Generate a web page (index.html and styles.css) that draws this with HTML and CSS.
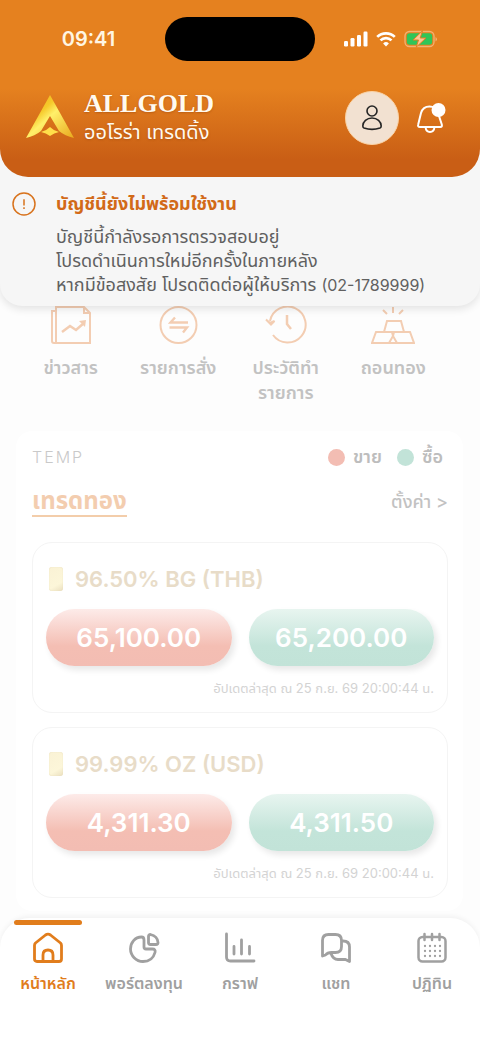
FILE: index.html
```html
<!DOCTYPE html>
<html lang="th">
<head>
<meta charset="utf-8">
<meta name="viewport" content="width=device-width, initial-scale=1">
<title>ALLGOLD</title>
<link rel="stylesheet" href="styles.css">
</head>
<body>
<div class="app">
  <header class="header">
    <div class="status">
      <time class="clock">09:41</time>
      <div class="island"></div>
      <div class="signals">
        <svg width="24" height="16" viewBox="0 0 24 16" fill="#fff"><rect x="0" y="10" width="4" height="5.500" rx="1.200"/><rect x="6.500" y="7" width="4" height="8.500" rx="1.200"/><rect x="13" y="4" width="4" height="11.500" rx="1.200"/><rect x="19.500" y="0.500" width="4" height="15" rx="1.200"/></svg>
        <svg width="20" height="16" viewBox="0 0 20 16" fill="none" stroke="#fff" stroke-width="2.700"><path d="M1.200 5.900a12.600 12.600 0 0 1 17.600 0M4.500 9.400a7.900 7.900 0 0 1 11 0"/><path d="M10 15.500l-2.900-3a4.200 4.200 0 0 1 5.800 0z" fill="#fff" stroke="none"/></svg>
        <svg width="34" height="18" viewBox="0 0 34 18"><rect x="1" y="1.500" width="29" height="15" rx="4.500" fill="none" stroke="#f3b272" stroke-width="1.300"/><rect x="2.800" y="3.300" width="25.400" height="11.400" rx="3" fill="#30c558"/><path d="M31.500 7v4.400q1.500-.7 1.500-2.200T31.500 7z" fill="#f3b272"/><path d="M18.500.8L9 10h5.500l-2.300 7.200L22 8h-5.800z" fill="#fbc795" stroke="#e27f22"/></svg>
      </div>
    </div>
    <div class="brand-row">
      <svg class="logo" width="50" height="46" viewBox="0 0 50 46">
        <defs><linearGradient id="gold" x1="0" y1="0" x2="1" y2="1"><stop offset="0" stop-color="#e8a818"/><stop offset=".35" stop-color="#f6c92a"/><stop offset=".5" stop-color="#fff06a"/><stop offset="1" stop-color="#e9a81c"/></linearGradient></defs>
        <path d="M25 0L1 43q9-2 15-7l9-15 9 15q6 5 15 7z" fill="url(#gold)"/>
        <path d="M25 32q4 4 9 5-5 1-9 4-4-3-9-4 5-1 9-5z" fill="#ffdf4a"/>
      </svg>
      <div class="brand">
        <h1 class="brand-name">ALLGOLD</h1>
        <p class="brand-sub">ออโรร่า เทรดดิ้ง</p>
      </div>
      <button class="avatar" aria-label="โปรไฟล์">
        <svg width="24" height="28" viewBox="0 0 24 28" fill="none" stroke="#252525" stroke-width="1.600"><circle cx="12" cy="7" r="5"/><path d="M2.800 22c0-4.500 4-8 9.200-8s9.200 3.500 9.200 8q0 1.500-1.200 2-8 2.800-16 0-1.200-.5-1.200-2z"/></svg>
      </button>
      <button class="bell" aria-label="การแจ้งเตือน">
        <svg width="30" height="32" viewBox="0 0 30 32" fill="none" stroke="#fff" stroke-width="2" stroke-linejoin="round"><path d="M5 11C6.500 6 9.500 4.500 13.500 4.500S20.500 6 22 11l3.800 11.500q.6 2.500-1.500 2.500H4Q1.500 25 2.200 22.500z"/><path d="M9.500 25q.5 5 4.500 5t4.500-5"/><circle cx="22.500" cy="8" r="7" fill="#fff" stroke="none"/></svg>
      </button>
    </div>
  </header>

  <section class="notice" role="alert">
    <svg class="notice-icon" width="24" height="24" viewBox="0 0 24 24" fill="none" stroke="#d8731d" stroke-width="1.500"><circle cx="12" cy="12" r="11"/><path d="M12 7.300v6.200M12 15.200v1.800"/></svg>
    <div class="notice-body">
      <h2 class="notice-title">บัญชีนี้ยังไม่พร้อมใช้งาน</h2>
      <p class="notice-text">บัญชีนี้กำลังรอการตรวจสอบอยู่<br>โปรดดำเนินการใหม่อีกครั้งในภายหลัง<br>หากมีข้อสงสัย โปรดติดต่อผู้ให้บริการ <span class="phone">(02-1789999)</span></p>
    </div>
  </section>

  <main class="content">
    <nav class="shortcuts">
      <a class="shortcut" href="#news">
        <svg width="40" height="40" viewBox="0 0 40 40" fill="none" stroke="currentColor" stroke-width="2"><path d="M5 1h28l6 6v30H5z"/><path d="M33 1v6h6M5 5H1v30q0 2 2 2h4"/><path d="M11 26l8-6 6 4 8-7" stroke-width="2.500"/><path d="M28 15l7-1-1 7z" fill="currentColor" stroke="none"/></svg>
        <span class="shortcut-label">ข่าวสาร</span>
      </a>
      <a class="shortcut" href="#orders">
        <svg width="40" height="40" viewBox="0 0 40 40" fill="none" stroke="currentColor" stroke-width="2"><circle cx="20.500" cy="19" r="18"/><path d="M30 16.500H12.500l4.500-5M11.500 21.500H29l-4 5" stroke-width="2.400"/></svg>
        <span class="shortcut-label">รายการสั่ง</span>
      </a>
      <a class="shortcut" href="#history">
        <svg width="42" height="40" viewBox="0 0 42 40" fill="none" stroke="currentColor" stroke-width="2"><path d="M5 15A18 18 0 1 1 8 29"/><path d="M1 13.500l4 3.500 4.500-2-3.500 3.500z" stroke-width="2"/><path d="M22 9v9l4 5" stroke-width="2.500"/></svg>
        <span class="shortcut-label">ประวัติทำ<br>รายการ</span>
      </a>
      <a class="shortcut" href="#withdraw">
        <svg width="44" height="40" viewBox="0 0 44 40" fill="none" stroke="currentColor" stroke-width="2"><path d="M16 15h14l3 11H13zM5 26h16l1 4 1-4h16l4 11H1zM18 37l4-7 4 7M22 1v6M12 4l4 4M32 4l-4 4"/></svg>
        <span class="shortcut-label">ถอนทอง</span>
      </a>
    </nav>

    <section class="panel">
      <div class="panel-top">
        <span class="account">TEMP</span>
        <div class="legend">
          <span class="legend-item"><i class="dot dot-sell"></i>ขาย</span>
          <span class="legend-item"><i class="dot dot-buy"></i>ซื้อ</span>
        </div>
      </div>
      <div class="panel-head">
        <h2 class="panel-title">เทรดทอง</h2>
        <a class="settings" href="#settings">ตั้งค่า &gt;</a>
      </div>

      <article class="quote">
        <h3 class="quote-title"><i class="bar"></i>96.50% BG (THB)</h3>
        <div class="prices">
          <button class="price sell">65,100.00</button>
          <button class="price buy">65,200.00</button>
        </div>
        <p class="updated">อัปเดตล่าสุด ณ 25 ก.ย. 69 20:00:44 น.</p>
      </article>

      <article class="quote">
        <h3 class="quote-title"><i class="bar"></i>99.99% OZ (USD)</h3>
        <div class="prices">
          <button class="price sell">4,311.30</button>
          <button class="price buy">4,311.50</button>
        </div>
        <p class="updated">อัปเดตล่าสุด ณ 25 ก.ย. 69 20:00:44 น.</p>
      </article>
    </section>
  </main>

  <nav class="tabs">
    <a class="tab active" href="#home">
      <svg width="32" height="32" viewBox="0 0 32 32"><path d="M2.500 13.500q0-1.500 1-2.500L13.500 3Q16 1.200 18.500 3l10 8q1 1 1 2.500V27q0 2.500-2.500 2.500H5Q2.500 29.500 2.500 27zM11 29v-6q0-5 5-5t5 5v6"/></svg>
      <span>หน้าหลัก</span>
    </a>
    <a class="tab" href="#portfolio">
      <svg width="32" height="32" viewBox="0 0 32 32"><path d="M13.500 5C7 5 2.500 10.500 2.500 17S8 29.500 15 29.500c6 0 10.500-3.500 12-9 .7-2.500-.5-3.500-2.500-3.500H18q-2 0-2-2V8q0-3-2.500-3z"/><path d="M22.500 2.500q7 1.500 7.500 8 0 2-2 2h-5.500q-2 0-2-2v-6q0-2 2-2z"/></svg>
      <span>พอร์ตลงทุน</span>
    </a>
    <a class="tab" href="#chart">
      <svg width="32" height="32" viewBox="0 0 32 32"><path d="M2.500 2v23q0 4 4 4H30M10 14.500v7.500M17.500 8v14M25.500 14.500v7.500"/></svg>
      <span>กราฟ</span>
    </a>
    <a class="tab" href="#chat">
      <svg width="32" height="32" viewBox="0 0 32 32"><path d="M8.500 2.500h7q6 0 6 6v6q0 6-6 6h-4q-4 0-6 2.500l-3 1V8.500q0-6 6-6z"/><path d="M23 9q6.500 0 6.500 6v14.500l-4-2H18q-5 0-7-6"/></svg>
      <span>แชท</span>
    </a>
    <a class="tab" href="#calendar">
      <svg width="32" height="32" viewBox="0 0 32 32"><rect x="2.500" y="5" width="27" height="24.500" rx="4" stroke-width="2.500"/><path d="M8.500 2v6M16 2v6M23.500 2v6" stroke-width="2.500"/><path d="M9 14v.01M14 14v.01M19 14v.01M24 14v.01M9 19v.01M14 19v.01M19 19v.01M24 19v.01M9 24v.01M14 24v.01M19 24v.01M24 24v.01" stroke-width="2.300"/></svg>
      <span>ปฏิทิน</span>
    </a>
  </nav>
</div>
</body>
</html>
```

FILE: styles.css
```css
* {
  box-sizing: border-box;
}

body,
h1,
h2,
h3,
p {
  margin: 0;
}

body {
  background: #fdfdfd;
  color: #606060;
  font-family: Inter, "Noto Sans Thai", "Noto Sans", sans-serif;
}

button {
  border: 0;
  padding: 0;
  background: none;
  font: inherit;
  color: inherit;
}

a {
  color: inherit;
  text-decoration: none;
}

svg {
  display: block;
  flex: none;
}

.app {
  display: flex;
  flex-direction: column;
  min-height: 100vh;
}

.header {
  position: relative;
  z-index: 2;
  background: linear-gradient(#e5811f 50%, #c95e15 90%);
  border-radius: 0 0 28px 28px;
  padding-bottom: 31px;
}

.status {
  display: grid;
  grid-template-columns: 1fr 150px 1fr;
  align-items: center;
  padding-top: 17px;
}

.clock {
  justify-self: center;
  padding-left: 12px;
  color: #fff6e3;
  font-size: 20px;
  font-weight: 600;
}

.island {
  height: 44px;
  border-radius: 22px;
  background: #000;
}

.signals {
  display: flex;
  align-items: center;
  justify-content: center;
  gap: 8px;
  padding-right: 13px;
}

.brand-row {
  display: flex;
  align-items: center;
  padding: 29px 34px 0 25px;
}

.brand {
  flex: 1;
  padding-left: 9px;
  color: #fffaf0;
  text-shadow: 0 1px 2px #9b480b88;
}

.brand-name {
  font-family: "Liberation Serif", serif;
  font-size: 26px;
  line-height: 28px;
}

.brand-sub {
  font-size: 20px;
  line-height: 28px;
}

.avatar {
  display: grid;
  place-items: center;
  width: 54px;
  height: 54px;
  border: 1px solid #fbd3a5;
  border-radius: 50%;
  background: #f2e1d1;
}

.bell {
  margin-left: 17px;
}

.notice {
  display: flex;
  gap: 20px;
  position: relative;
  z-index: 1;
  margin-top: -28px;
  padding: 41px 12px 9px;
  border-radius: 0 0 22px 22px;
  background: #f6f6f6;
  box-shadow: 0 3px 8px #0000001c;
}

.notice-icon {
  margin-top: 2px;
}

.notice-title {
  margin-bottom: 7px;
  color: #d26a18;
  font-size: 18px;
  line-height: 28px;
}

.notice-text {
  font-size: 18px;
  line-height: 24px;
}

.phone {
  font-size: 16px;
}

.content {
  flex: 1;
  padding-bottom: 6px;
}

.shortcuts {
  display: grid;
  grid-template-columns: repeat(4, 1fr);
  padding: 0 33px 0 17px;
}

.shortcut {
  display: flex;
  flex-direction: column;
  align-items: center;
  gap: 9px;
  color: #f3cdb2;
}

.shortcut-label {
  color: #c2c2c2;
  font-size: 18px;
  font-weight: 600;
  line-height: 25px;
  text-align: center;
}

.panel {
  margin: 26px 17px 0 16px;
  padding: 12px 15px 13px 16px;
  border-radius: 16px;
  background: #fff;
}

.panel-top,
.panel-head {
  display: flex;
  align-items: center;
  justify-content: space-between;
}

.account {
  color: #c9c9c9;
  font-size: 16px;
  font-weight: 300;
  letter-spacing: 2px;
}

.legend {
  display: flex;
  gap: 15px;
  padding-right: 5px;
}

.legend-item {
  display: flex;
  align-items: center;
  gap: 8px;
  color: #bdbdbd;
  font-size: 18px;
  font-weight: 600;
  line-height: 28px;
}

.dot {
  width: 17px;
  height: 17px;
  border-radius: 50%;
}

.dot-sell {
  background: #f3bdb3;
}

.dot-buy {
  background: #c2e3d8;
}

.panel-head {
  margin-top: 16px;
}

.panel-title {
  border-bottom: 2px solid #f3cdaa;
  color: #f3cdaf;
  font-size: 24px;
  line-height: 28px;
}

.settings {
  color: #c2c2c2;
  font-size: 18px;
  font-weight: 500;
}

.quote {
  margin-top: 14px;
  padding: 19px 13px 13px;
  border: 1px solid #f4f4f4;
  border-radius: 20px;
}

.panel-head + .quote {
  margin-top: 25px;
}

.quote-title {
  display: flex;
  align-items: center;
  gap: 12px;
  padding-left: 3px;
  color: #e8dcc8;
  font-size: 22px;
  font-weight: 600;
  line-height: 34px;
}

.bar {
  width: 14px;
  height: 24px;
  border-radius: 3px;
  background: linear-gradient(150deg, #faf2d5, #fcf6d9 70%, #eadfbf);
  box-shadow: inset 0 0 1px #e0d2a8;
}

.prices {
  display: grid;
  grid-template-columns: 1fr 1fr;
  gap: 17px;
  margin-top: 13px;
}

.price {
  height: 57px;
  border-radius: 29px;
  color: #fff;
  font-size: 26px;
  font-weight: 600;
  box-shadow: 3px 4px 6px #00000018;
}

.sell {
  background: linear-gradient(#fdebe9, #f4beb3 65%, #f3bdb3);
}

.buy {
  background: linear-gradient(#e8f5f0, #c3e4d9 65%, #c2e3d8);
}

.updated {
  margin-top: 11px;
  color: #d3d3d3;
  font-size: 13px;
  line-height: 22px;
  text-align: right;
}

.tabs {
  display: grid;
  grid-template-columns: repeat(5, 1fr);
  min-height: 126px;
  border-radius: 30px 30px 0 0;
  background: #fff;
  box-shadow: 0 -2px 5px #0000000c;
}

.tab {
  display: flex;
  flex-direction: column;
  align-items: center;
  gap: 7px;
  padding-top: 7px;
  color: #a0a0a0;
  font-size: 16px;
  font-weight: 600;
  line-height: 24px;
  white-space: nowrap;
}

.tab::before {
  width: 68px;
  height: 5px;
  margin-top: -5px;
  border-radius: 3px;
  content: "";
}

.tab svg {
  fill: none;
  stroke: currentColor;
  stroke-width: 2.800;
  stroke-linecap: round;
  stroke-linejoin: round;
}

.active {
  color: #e17d1c;
}

.active::before {
  background: #e17d1c;
}
```
